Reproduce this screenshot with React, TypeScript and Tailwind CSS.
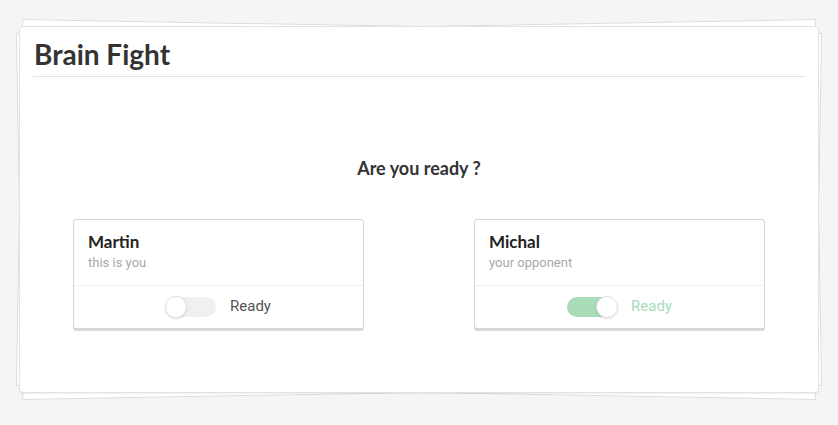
import React from 'react';

interface Player {
  name: string;
  note: string;
  ready: boolean;
}

const players: Player[] = [
  { name: 'Martin', note: 'this is you', ready: false },
  { name: 'Michal', note: 'your opponent', ready: true },
];

const Toggle: React.FC<{ on: boolean }> = ({ on }) => (
  <div
    className={`relative w-[50px] h-[20px] rounded-full ${on ? 'bg-[#a9dcb9]' : 'bg-[#f0f0f0]'}`}
  >
    <div
      className={`absolute top-[-1px] w-[22px] h-[22px] rounded-full bg-white border border-[#e2e2e2] shadow-[0_1px_2px_rgba(0,0,0,0.12)] ${on ? 'right-[-1px]' : 'left-[-1px]'}`}
    />
  </div>
);

const PlayerCard: React.FC<{ player: Player }> = ({ player }) => (
  <div className="w-[291px] h-[110px] bg-white border border-[#d6d6d6] rounded-[3px] shadow-[0_2px_0_#d9d9d9] flex flex-col">
    <div className="h-[66px] px-[14px] pt-[11px] border-b border-[#efefef]">
      <p className="font-['Lato'] font-bold text-[17px] leading-[22px] text-[#222]">{player.name}</p>
      <p className="font-['Roboto'] text-[13px] leading-[20px] text-[#a9a9a9]">{player.note}</p>
    </div>
    <div className="flex-1 flex items-center justify-center gap-[14px] pb-[1px]">
      <Toggle on={player.ready} />
      <span
        className={`font-['Roboto'] text-[15px] ${player.ready ? 'text-[#a9dcb9]' : 'text-[#555]'}`}
      >
        Ready
      </span>
    </div>
  </div>
);

export default function App() {
  return (
    <div className="min-h-[425px] w-full bg-[#f5f5f5] pt-[26px] font-['Lato',sans-serif]">
      <div className="relative mx-auto w-[800px] h-[367px]">
        {/* Paper stack behind */}
        <div className="absolute inset-0 bg-white border border-[#dcdcdc] rotate-1" />
        <div className="absolute inset-0 bg-white border border-[#dcdcdc] -rotate-1" />

        <div className="relative h-full bg-white border border-[#e2e2e2] rounded-[4px] shadow-[0_1px_1px_rgba(0,0,0,0.06)] px-[13px]">
          <div className="border-b border-[#e3e3e3] pl-[1px] pt-[9px] pb-[3px]">
            <h1 className="font-['Lato'] font-bold text-[28px] leading-[37px] text-[#333]">Brain Fight</h1>
          </div>

          <h2 className="mt-[79px] text-center font-['Lato'] font-bold text-[18px] leading-[24px] text-[#333]">
            Are you ready ?
          </h2>

          <div className="mt-[39px] flex justify-between px-[40px]">
            {players.map((p) => (
              <PlayerCard key={p.name} player={p} />
            ))}
          </div>
        </div>
      </div>
    </div>
  );
}
